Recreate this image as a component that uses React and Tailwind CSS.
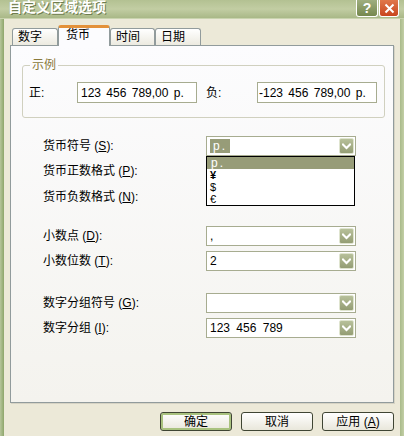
import React from 'react';

// XP olive-theme "自定义区域选项" dialog, currency tab with the symbol list open

function Chevron() {
  return (
    <svg width="9" height="7" viewBox="0 0 9 7" fill="none">
      <path d="M1 1.5 L4.5 5 L8 1.5" stroke="white" strokeWidth="2" strokeLinecap="square" />
    </svg>
  );
}

function ArrowButton() {
  return (
    <div className="w-[15px] h-[16px] rounded-[2px] border border-[#dfe4cf] bg-gradient-to-b from-[#b7c09a] to-[#949d74] flex items-center justify-center">
      <Chevron />
    </div>
  );
}

function Combo({ children }) {
  return (
    <div className="w-[150px] h-[20px] border border-[#a7ac90] bg-white flex items-center pl-[3px] pr-[1px]">
      <div className="flex-1 text-[12px] leading-[14px] [word-spacing:3px]">{children}</div>
      <ArrowButton />
    </div>
  );
}

function Label({ text, k }) {
  return (
    <div className="w-[163px] shrink-0 text-[12px] leading-[14px]">
      {text} (<span className="underline">{k}</span>):
    </div>
  );
}

function Row({ text, k, children, className = '' }) {
  return (
    <div className={`flex items-center h-[20px] ${className}`}>
      <Label text={text} k={k} />
      {children}
    </div>
  );
}

function Tab({ label, width, active }) {
  if (active) {
    return (
      <div
        className={`${width} h-[21px] relative z-10 bg-[#fcfcfe] border border-b-0 border-[#919b9c] border-t-[3px] border-t-[#e3913a] rounded-t-[3px] pl-[7px] text-[12px] leading-[14px]`}
      >
        {label}
      </div>
    );
  }
  return (
    <div
      className={`${width} h-[17px] mb-[1px] bg-gradient-to-b from-white to-[#eceae0] border border-b-0 border-[#919b9c] rounded-t-[3px] pl-[5px] pt-[1px] text-[12px] leading-[14px]`}
    >
      {label}
    </div>
  );
}

function Button({ children, primary }) {
  return (
    <div
      className={`w-[72px] h-[19px] rounded-[3px] border border-[#3f4533] bg-gradient-to-b from-white to-[#e9e7db] flex items-center justify-center text-[12px] leading-[14px] ${
        primary ? 'shadow-[inset_0_0_0_2px_#a9c27f]' : ''
      }`}
    >
      {children}
    </div>
  );
}

export default function App() {
  return (
    <div className="w-[404px] h-[436px] overflow-hidden flex flex-col bg-[#ece9d8] text-black font-['Liberation_Sans','Noto_Sans_CJK_SC',sans-serif]">
      {/* title bar */}
      <div className="h-[19px] shrink-0 flex items-start bg-gradient-to-b from-[#b3c192] via-[#c2cda3] to-[#a9b887] border-b border-[#c9d3ae]">
        <div className="flex-1 pl-[8px] text-white font-bold text-[14px] leading-[14px] [text-shadow:1px_1px_0_#6f7d50]">
          自定义区域选项
        </div>
        <div className="flex mr-[5px]">
          <div className="w-[22px] h-[17px] rounded-b-[3px] border border-t-0 border-white bg-gradient-to-b from-[#9fae7f] to-[#76884e] flex items-center justify-center text-white font-bold text-[14px] leading-[14px]">
            ?
          </div>
          <div className="w-[20px] h-[17px] ml-[1px] rounded-b-[3px] border border-t-0 border-white bg-gradient-to-b from-[#e0774a] to-[#c8451d] flex items-center justify-center">
            <svg width="11" height="11" viewBox="0 0 11 11">
              <path d="M1.5 1.5 L9.5 9.5 M9.5 1.5 L1.5 9.5" stroke="white" strokeWidth="2" />
            </svg>
          </div>
        </div>
      </div>

      <div className="flex-1 flex">
        <div className="w-[4px] bg-gradient-to-r from-[#b7c69c] to-[#8ea66b]" />

        <div className="flex-1 flex flex-col pl-[6px] pr-[6px] pt-[6px]">
          {/* tabs */}
          <div className="flex items-end pl-[2px] -mb-[1px]">
            <Tab label="数字" width="w-[46px]" />
            <Tab label="货币" width="w-[52px]" active />
            <Tab label="时间" width="w-[45px]" />
            <Tab label="日期" width="w-[46px]" />
          </div>

          {/* tab page */}
          <div className="h-[358px] border border-[#919b9c] bg-gradient-to-b from-[#fcfcfe] to-[#f4f3ee] shadow-[1px_1px_0_#d6d3c4] px-[11px] flex flex-col">
            <fieldset className="mt-[12px] mr-[-3px] border border-[#d0d0bf] rounded-[3px] px-[6px] pt-[10px] pb-[14px]">
              <legend className="ml-[1px] px-[2px] text-[12px] leading-[14px] text-[#8a7a3a]">示例</legend>
              <div className="flex items-center text-[12px] leading-[14px]">
                <div className="w-[48px]">正:</div>
                <div className="w-[120px] h-[21px] border border-[#a7ac90] bg-white flex items-center pl-[3px] [word-spacing:2px]">
                  123 456 789,00 p.
                </div>
                <div className="w-[51px] ml-[9px]">负:</div>
                <div className="w-[120px] h-[21px] border border-[#a7ac90] bg-white flex items-center pl-[1px] [word-spacing:2px]">
                  -123 456 789,00 p.
                </div>
              </div>
            </fieldset>

            <div className="flex flex-col pl-[21px] mt-[18px]">
              <Row text="货币符号" k="S">
                <div className="relative">
                  <Combo>
                    <span className="bg-[#979c78] text-white px-[3px] tracking-[2px]">p.</span>
                  </Combo>
                  {/* open symbol list */}
                  <div className="absolute left-0 top-full w-[149px] h-[50px] border border-black bg-white z-20 flex flex-col text-[11px] leading-[12px]">
                    <div className="h-[12px] bg-[#979c78] text-white pl-[4px] tracking-[2px] text-[12px]">p.</div>
                    <div className="h-[12px] pl-[3px] font-bold">¥</div>
                    <div className="h-[12px] pl-[3px]">$</div>
                    <div className="h-[12px] pl-[3px]">€</div>
                  </div>
                </div>
              </Row>
              <Row text="货币正数格式" k="P" className="mt-[5px]">
                <div className="w-[150px]" />
              </Row>
              <Row text="货币负数格式" k="N" className="mt-[6px]">
                <div className="w-[150px]" />
              </Row>

              <Row text="小数点" k="D" className="mt-[19px]">
                <Combo>,</Combo>
              </Row>
              <Row text="小数位数" k="T" className="mt-[5px]">
                <Combo>2</Combo>
              </Row>

              <Row text="数字分组符号" k="G" className="mt-[22px]">
                <Combo />
              </Row>
              <Row text="数字分组" k="I" className="mt-[5px]">
                <Combo>123 456 789</Combo>
              </Row>
            </div>
          </div>

          {/* dialog buttons */}
          <div className="flex justify-end gap-[9px] mt-[9px]">
            <Button primary>确定</Button>
            <Button>取消</Button>
            <Button>
              应用 (<span className="underline">A</span>)
            </Button>
          </div>
        </div>

        <div className="w-[4px] bg-gradient-to-r from-[#a9ba8a] to-[#c3cfa6]" />
      </div>
    </div>
  );
}
